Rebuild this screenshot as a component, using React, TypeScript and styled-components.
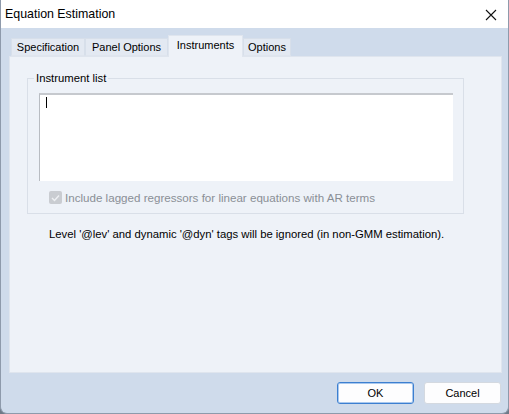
import React from "react";
import styled, { createGlobalStyle } from "styled-components";

const Global = createGlobalStyle`
  html, body { margin: 0; padding: 0; background: #6e7a88; }
  body { font-family: "Liberation Sans", Arial, sans-serif; }
  #root { width: 509px; height: 414px; }
`;

const Window = styled.div`
  box-sizing: border-box;
  width: 509px;
  height: 414px;
  display: flex;
  flex-direction: column;
  background: #cfdbeb;
  border: 1px solid #8e9aab;
  border-top: none;
  border-radius: 0 0 7px 7px;
  overflow: hidden;
`;

const TitleBar = styled.div`
  height: 28px;
  flex: none;
  background: #ffffff;
  display: flex;
  align-items: center;
  justify-content: space-between;
  padding: 0 11px 0 4px;
  font-size: 12.4px;
  color: #000;
`;

const Close = styled.svg`
  width: 12px;
  height: 12px;
  margin-top: 1px;
`;

const Body = styled.div`
  flex: 1;
  display: flex;
  flex-direction: column;
  padding: 7px 6px 0 8px;
`;

const TabStrip = styled.div`
  height: 21px;
  display: flex;
  align-items: flex-end;
  padding-left: 2px;
  position: relative;
  z-index: 1;
`;

const Tab = styled.div<{ $active?: boolean; $w: number }>`
  box-sizing: border-box;
  height: ${(p) => (p.$active ? "22px" : "18px")};
  margin-bottom: ${(p) => (p.$active ? "-1px" : "0")};
  padding: 0 4px;
  width: ${(p) => p.$w}px;
  display: flex;
  align-items: center;
  justify-content: center;
  font-size: 11px;
  color: #000;
  background: ${(p) => (p.$active ? "#eef2f8" : "#e3e9f2")};
  border: 1px solid ${(p) => (p.$active ? "#dfe5ee" : "#d7dfea")};
  border-bottom: ${(p) => (p.$active ? "none" : "1px solid #dfe5ee")};
  padding-bottom: ${(p) => (p.$active ? "4px" : "0")};
`;

const Panel = styled.div`
  box-sizing: border-box;
  height: 317px;
  background: #eef2f8;
  border: 1px solid #dfe5ee;
  padding: 15px 0 0 17px;
  display: flex;
  flex-direction: column;
`;

const Group = styled.fieldset`
  box-sizing: border-box;
  width: 437px;
  height: 142px;
  margin: 0;
  padding: 9px 10px 0 11px;
  border: 1px solid #d9dfe8;
  border-radius: 0;
  display: flex;
  flex-direction: column;
`;

const Legend = styled.legend`
  font-size: 11.3px;
  color: #000;
  padding: 0 2px;
  margin-left: -5px;
`;

const ListBox = styled.div`
  box-sizing: border-box;
  height: 88px;
  background: #ffffff;
  border-top: 2px solid #c6c9ce;
  border-left: 1px solid #b8bcc2;
  padding: 2px 0 0 6px;
`;

const Caret = styled.div`
  width: 1px;
  height: 11px;
  background: #000;
`;

const CheckRow = styled.label`
  display: flex;
  align-items: center;
  gap: 3px;
  margin: 10px 0 0 10px;
  font-size: 11.6px;
  color: #8a8f96;
`;

const CheckBox = styled.div`
  box-sizing: border-box;
  width: 13px;
  height: 13px;
  border-radius: 2px;
  background: #c9ccd1;
  display: flex;
  align-items: center;
  justify-content: center;
`;

const Note = styled.div`
  font-size: 11.3px;
  color: #000;
  margin: 14px 0 0 22px;
`;

const Footer = styled.div`
  flex: 1;
  display: flex;
  justify-content: flex-end;
  align-items: flex-start;
  gap: 10px;
  padding: 9px 1px 0 0;
`;

const Button = styled.button<{ $default?: boolean }>`
  box-sizing: border-box;
  width: 77px;
  height: 22px;
  font-family: "Liberation Sans", Arial, sans-serif;
  font-size: 11px;
  color: #000;
  background: #fdfdfe;
  border: 1px solid ${(p) => (p.$default ? "#3c7fd0" : "#d4d9e0")};
  box-shadow: ${(p) => (p.$default ? "inset 0 0 0 1px #a9c8ee" : "none")};
  border-radius: 3px;
  padding: 0;
`;

const tabs = [
  { label: "Specification", w: 74 },
  { label: "Panel Options", w: 83 },
  { label: "Instruments", w: 75, active: true },
  { label: "Options", w: 48 },
];

export default function App() {
  return (
    <>
      <Global />
      <Window>
        <TitleBar>
          <span>Equation Estimation</span>
          <Close viewBox="0 0 12 12">
            <path d="M1 1 L11 11 M11 1 L1 11" stroke="#111" strokeWidth="1.1" fill="none" />
          </Close>
        </TitleBar>
        <Body>
          <TabStrip>
            {tabs.map((t) => (
              <Tab key={t.label} $active={t.active} $w={t.w}>
                {t.label}
              </Tab>
            ))}
          </TabStrip>
          <Panel>
            <Group>
              <Legend>Instrument list</Legend>
              <ListBox>
                <Caret />
              </ListBox>
              <CheckRow>
                <CheckBox>
                  <svg width="9" height="8" viewBox="0 0 9 8">
                    <path d="M1 4 L3.5 6.5 L8 1.5" stroke="#eef0f3" strokeWidth="1.4" fill="none" />
                  </svg>
                </CheckBox>
                Include lagged regressors for linear equations with AR terms
              </CheckRow>
            </Group>
            <Note>Level '@lev' and dynamic '@dyn' tags will be ignored (in non-GMM estimation).</Note>
          </Panel>
          <Footer>
            <Button $default>OK</Button>
            <Button>Cancel</Button>
          </Footer>
        </Body>
      </Window>
    </>
  );
}
